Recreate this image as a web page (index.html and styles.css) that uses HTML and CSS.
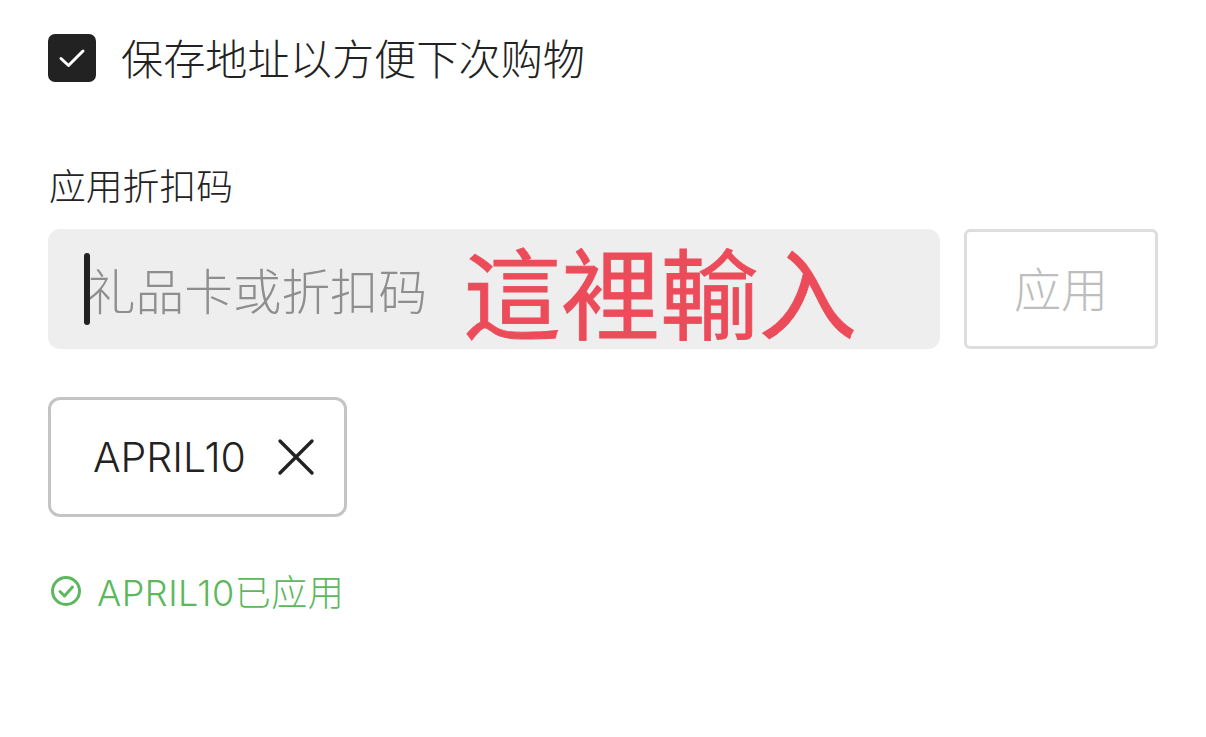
FILE: index.html
```html
<!DOCTYPE html>
<html lang="zh">
<head>
    <meta charset="UTF-8">
    <meta name="viewport" content="width=device-width, initial-scale=1.0">
    <link rel="stylesheet" href="styles.css">
    <title>折扣码</title>
</head>
<body>
    <div class="contenedor">
        <label class="guardar">
            <span class="casilla">
                <svg width="48" height="48" viewBox="0 0 48 48"><path d="M13 24.5l7.5 7L35 17" fill="none" stroke="#fff" stroke-width="3" stroke-linecap="round" stroke-linejoin="round"/></svg>
            </span>
            <span class="guardar-texto">保存地址以方便下次购物</span>
        </label>

        <div class="etiqueta">应用折扣码</div>

        <div class="fila">
            <div class="campo">
                <span class="cursor"></span>
                <span class="placeholder">礼品卡或折扣码</span>
                <span class="nota">這裡輸入</span>
            </div>
            <button class="btn-aplicar">应用</button>
        </div>

        <div class="chip">
            <span class="chip-texto">APRIL10</span>
            <svg width="38" height="38" viewBox="0 0 38 38"><path d="M3 3l32 32M35 3L3 35" fill="none" stroke="#222" stroke-width="3.4" stroke-linecap="round"/></svg>
        </div>

        <div class="aplicado">
            <svg class="aplicado-icono" width="32" height="32" viewBox="0 0 32 32"><circle cx="16" cy="16" r="13.5" fill="none" stroke="#5cb85c" stroke-width="3"/><path d="M10 16.5l4.5 4.5L22.5 12" fill="none" stroke="#5cb85c" stroke-width="3" stroke-linecap="round" stroke-linejoin="round"/></svg>
            <span class="aplicado-texto">APRIL10已应用</span>
        </div>
    </div>
</body>
</html>
```

FILE: styles.css
```css
* {
    margin: 0;
    padding: 0;
    box-sizing: border-box;
    font-family: "Inter", "Noto Sans CJK SC", sans-serif;
}
body {
    background-color: #fff;
    color: #222;
}
.contenedor {
    padding: 34px 48px 0 48px;
}
.guardar {
    display: flex;
    align-items: center;
    gap: 25px;
    height: 48px;
    font-size: 42.2px;
    font-weight: 300;
}
.guardar-texto {
    padding-bottom: 4px;
}
.casilla {
    display: flex;
    width: 48px;
    height: 48px;
    background-color: #222;
    border-radius: 7px;
}
.etiqueta {
    margin-top: 82px;
    height: 48px;
    line-height: 46px;
    padding-left: 1px;
    font-size: 36.8px;
    font-weight: 300;
}
.fila {
    display: flex;
    gap: 24px;
    margin-top: 17px;
}
.campo {
    position: relative;
    display: flex;
    align-items: center;
    width: 892px;
    height: 120px;
    padding-left: 39px;
    background-color: #eee;
    border-radius: 12px;
}
.placeholder {
    font-size: 48.6px;
    font-weight: 300;
    color: #8e8e8e;
}
.cursor {
    position: absolute;
    left: 36px;
    top: 24px;
    width: 6px;
    height: 72px;
    background-color: #222;
    border-radius: 3px;
}
.nota {
    position: absolute;
    left: 415px;
    top: 0;
    font-family: "Noto Sans CJK TC", sans-serif;
    font-size: 98.5px;
    line-height: 120px;
    font-weight: 400;
    -webkit-text-stroke: 0.8px #ec4b5a;
    color: #ec4b5a;
}
.btn-aplicar {
    width: 194px;
    height: 120px;
    padding-bottom: 6px;
    background-color: #fff;
    border: 3px solid #ddd;
    border-radius: 6px;
    font-size: 47px;
    font-weight: 300;
    color: #bdbdbd;
}
.chip {
    display: inline-flex;
    align-items: center;
    gap: 31px;
    margin-top: 48px;
    width: 299px;
    height: 120px;
    padding-left: 42px;
    border: 3px solid #c4c4c4;
    border-radius: 12px;
}
.chip-texto {
    font-size: 41px;
    font-weight: 300;
}
.aplicado {
    display: flex;
    align-items: center;
    gap: 15px;
    margin-top: 47px;
    padding-left: 2px;
    font-weight: 300;
    color: #5cb85c;
}
.aplicado-icono {
    margin-top: 2px;
}
.aplicado-texto {
    font-size: 36px;
    letter-spacing: 0.5px;
}
```
